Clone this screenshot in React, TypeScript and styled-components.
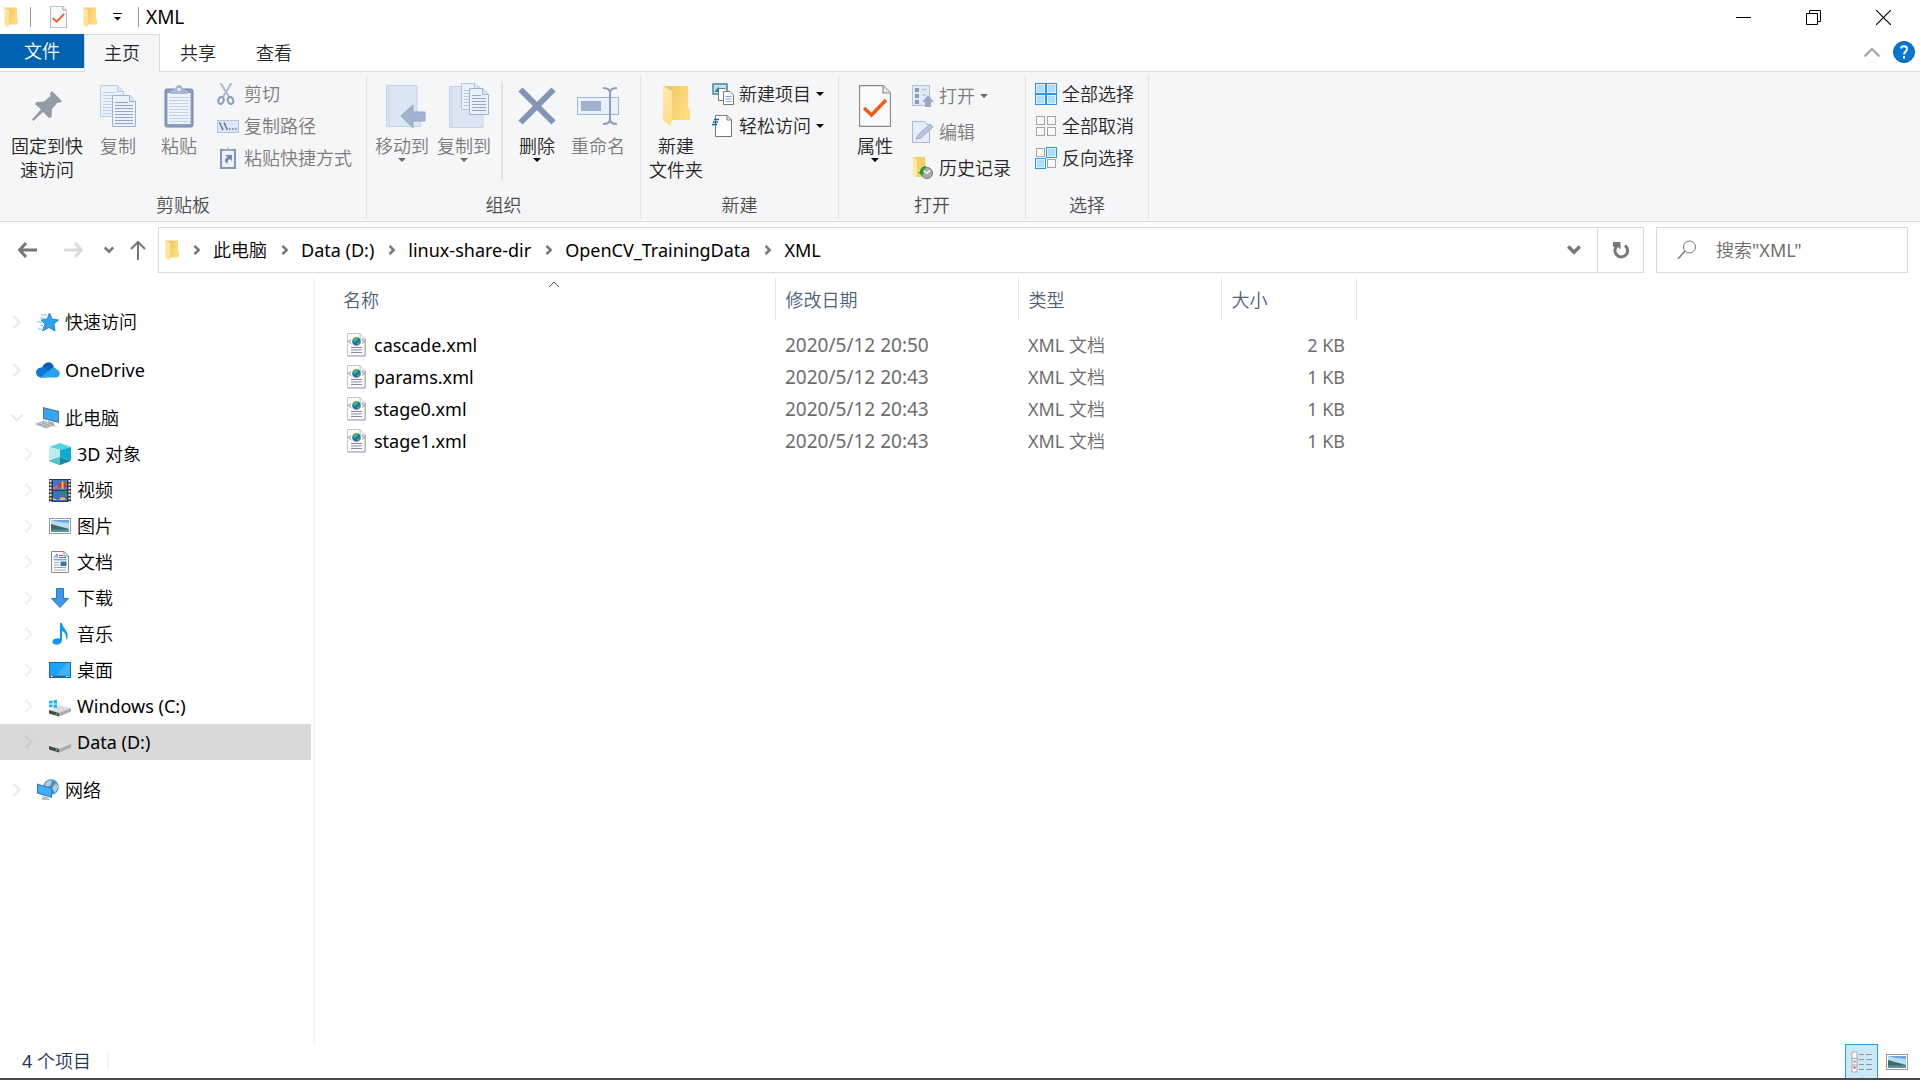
import React from "react";
import styled, { createGlobalStyle } from "styled-components";

const Global = createGlobalStyle`
  *, *::before, *::after { box-sizing: border-box; }
  body { margin: 0; background: #fff; }
  body, button, input, table {
    font-family: "Noto Sans", "Noto Sans CJK SC DemiLight", "Noto Sans CJK SC", sans-serif;
    font-size: 18px;
    line-height: 24px;
    color: #000;
  }
  button { border: 0; padding: 0; background: none; }
  svg { display: block; flex: none; }
  ul, ol { margin: 0; padding: 0; list-style: none; }
`;

/* ---------- icons ---------- */

const FolderIcon = ({ w = 14, h = 21 }: { w?: number; h?: number }) => (
  <svg width={w} height={h} viewBox="0 0 28 42">
    <defs>
      <linearGradient id="fback" x1="0" y1="0" x2="1" y2="0.4">
        <stop offset="0" stopColor="#e9c25c" />
        <stop offset="1" stopColor="#ffdd80" />
      </linearGradient>
      <linearGradient id="ffront" x1="0" y1="0" x2="0" y2="1">
        <stop offset="0" stopColor="#ffe9a8" />
        <stop offset="1" stopColor="#ffdf86" />
      </linearGradient>
    </defs>
    <path d="M1 1H26V22L28 25V35H4Z" fill="url(#fback)" />
    <path d="M1 1L10 6V36L8 41L1 35Z" fill="url(#ffront)" />
  </svg>
);

const CheckDocIcon = ({ w, h }: { w: number; h: number }) => (
  <svg width={w} height={h} viewBox="0 0 32 42">
    <path d="M.5 .5H24L31.500 8V41.500H.5Z" fill="#fafafa" stroke="#8a8a8a" strokeWidth="1.300" />
    <path d="M24 .5V8H31.500" fill="#e8e8e8" stroke="#8a8a8a" strokeWidth="1.200" />
    <path d="M5 23L12.500 30L27 15" fill="none" stroke="#f4591a" strokeWidth="3.400" />
  </svg>
);

const PinIcon = () => (
  <svg width="30" height="30" viewBox="0 0 30 30">
    <path d="M20 0L30 10L27 12L25.500 11.500L20 18L19.500 26L17 27L11 21L1.500 30L0 28.500L9 18.500L3 13L4.500 11L12 10.500L18.500 5L18 2.500Z" fill="#929da3" />
  </svg>
);

const Sheet = ({ x, y, w, h, s = "#9fb1cd", l = "#93a5c3" }: { x: number; y: number; w: number; h: number; s?: string; l?: string }) => (
  <g transform={`translate(${x} ${y})`}>
    <path d={`M.5 .5H${w - 6}L${w - 0.5} 6.500V${h - 0.5}H.5Z`} fill="#e9f1fb" stroke={s} />
    <path d={`M${w - 6.5} .5V6.500H${w - 0.5}`} fill="#dbe6f4" stroke={s} />
    {Array.from({ length: Math.floor((h - 8) / 3) }, (_, i) => (
      <path key={i} d={`M3 ${7.5 + i * 3}H${i === 0 ? w - 8 : w - 3}`} stroke={l} />
    ))}
  </g>
);

const CopyIcon = () => (
  <svg width="36" height="42" viewBox="0 0 36 42">
    <Sheet x={0} y={0} w={24} h={32} s="#bccbe0" l="#c3d0e4" />
    <Sheet x={12} y={10} w={24} h={32} />
  </svg>
);

const PasteIcon = () => (
  <svg width="30" height="43" viewBox="0 0 30 43">
    <rect x="1" y="4" width="28" height="38" rx="2" fill="#8b9cbf" stroke="#7386ab" />
    <rect x="3.500" y="8" width="23" height="31" fill="#edf3fc" />
    {Array.from({ length: 9 }, (_, i) => (
      <path key={i} d={`M5 ${12.5 + i * 3}H25`} stroke="#c6d3e7" />
    ))}
    <path d="M6 9V6L11 4C12 1 13 0 15 0S18 1 19 4L24 6V9Z" fill="#a9b7cf" />
    <rect x="13.500" y="3" width="3" height="3" fill="#e9f0fa" />
  </svg>
);

const CutIcon = () => (
  <svg width="22" height="22" viewBox="0 0 22 22" fill="none">
    <path d="M3.500 0L12 14M14.500 0L6 14" stroke="#a9bad2" strokeWidth="2" />
    <ellipse cx="4" cy="17.500" rx="2.600" ry="3.500" stroke="#8b9cbb" strokeWidth="2" transform="rotate(20 4 17.500)" />
    <ellipse cx="13.500" cy="17.500" rx="2.600" ry="3.500" stroke="#8b9cbb" strokeWidth="2" transform="rotate(-20 13.500 17.500)" />
  </svg>
);

const PathIcon = () => (
  <svg width="22" height="22" viewBox="0 0 22 22">
    <rect x=".5" y="5.500" width="21" height="12" fill="#dbe7f6" stroke="#b3c2d9" />
    <path d="M2.500 7.500L6 15M7 7.500L10.500 15" stroke="#62718f" strokeWidth="1.500" />
    <path d="M12 14h1.500M15 14h1.500M18 14h1.500" stroke="#62718f" strokeWidth="1.500" />
  </svg>
);

const ShortcutIcon = () => (
  <svg width="22" height="22" viewBox="0 0 22 22">
    <rect x="4" y="3" width="14" height="18" fill="#edf3fb" stroke="#8495b8" strokeWidth="2" />
    <path d="M6 4L9 2H10L11 0L12 2H13L16 4Z" fill="#9dacc8" />
    <path d="M8 8H15V14L13 12C10.500 13 10 15 11 17C7 15 7 12 10.500 10Z" fill="#7388ae" />
  </svg>
);

const MoveIcon = () => (
  <svg width="48" height="43" viewBox="-8 0 48 43">
    <path d="M.5 .5H31V28H34.500V41.500H.5Z" fill="#dae6f4" stroke="#c4d3e8" />
    <path d="M3 1V41" stroke="#c9d7ea" />
    <path d="M15 31L27 20V27H39V36H27V43Z" fill="#a3b3cf" stroke="#93a5c3" />
  </svg>
);

const CopyToIcon = () => (
  <svg width="50" height="46" viewBox="-10 0 50 46">
    <path d="M.5 3.500H31V32H34V44.500H.5Z" fill="#dae6f4" stroke="#c4d3e8" />
    <path d="M3 4V44" stroke="#c9d7ea" />
    <Sheet x={12} y={0} w={20} h={27} s="#b4c4dc" l="#b9c8de" />
    <Sheet x={20} y={5} w={20} h={27} />
  </svg>
);

const DeleteIcon = () => (
  <svg width="38" height="38" viewBox="0 0 38 38">
    <path d="M2.500 2.500L35.500 35.500M35.500 2.500L2.500 35.500" stroke="#8295b5" strokeWidth="6" />
  </svg>
);

const RenameIcon = () => (
  <svg width="42" height="40" viewBox="0 0 42 40" fill="none">
    <rect x=".5" y="11.500" width="41" height="17" fill="#e8f1fc" stroke="#a5b6d2" />
    <rect x="4" y="15" width="20" height="10" fill="#a0b1cd" />
    <path d="M26 2C31 2 33 4 33 7C33 4 35 2 40 2M26 38C31 38 33 36 33 33C33 36 35 38 40 38M33 5V35" stroke="#8c9dbd" strokeWidth="2" />
  </svg>
);

const NewItemIcon = () => (
  <svg width="22" height="22" viewBox="0 0 22 22">
    <rect x="1" y="1" width="14" height="10" fill="#c3e4f3" stroke="#3f87a8" strokeWidth="1.500" />
    <path d="M3 8L6 4L10 9H3Z" fill="#3b8168" />
    <path d="M6.500 5.500H13L16 8.500V17.500H6.500Z" fill="#fff" stroke="#777" />
    <path d="M11.500 8.500H18L21.500 12V21.500H11.500Z" fill="#fff" stroke="#777" />
    <path d="M13.500 13.500h6M13.500 16h6M13.500 18.500h6" stroke="#7da5e0" />
  </svg>
);

const EasyAccessIcon = () => (
  <svg width="22" height="22" viewBox="0 0 22 22">
    <path d="M3.500 .5H15L19.500 5V21.500H3.500Z" fill="#fdfdfd" stroke="#777" />
    <path d="M15 .5V5H19.500" fill="none" stroke="#777" />
    <path d="M2 4.500H7M1 7H6M0 9.500H5" stroke="#1565b0" strokeWidth="1.500" />
  </svg>
);

const OpenIcon = () => (
  <svg width="22" height="22" viewBox="0 0 22 22">
    <rect x=".5" y=".5" width="17" height="20" fill="#e1ebf8" stroke="#b3c2da" />
    <path d="M3 3h4v4H3zM3 9h4v4H3zM3 15h4v4H3z" fill="#8798b9" />
    <path d="M10 4.500H15M10 10H14" stroke="#b7c6dc" strokeWidth="1.500" />
    <path d="M16 10L22 17H19V22H13V17H10Z" fill="#98a9c8" />
  </svg>
);

const EditIcon = () => (
  <svg width="22" height="22" viewBox="0 0 22 22">
    <path d="M.5 .5H12L17.500 5V21.500H.5Z" fill="#e5eefa" stroke="#a8b9d4" />
    <path d="M4 18L6 14L18 3L21 6L9 17Z" fill="#b7c6de" stroke="#8fa3c3" strokeWidth=".8" />
  </svg>
);

const HistoryIcon = () => (
  <svg width="22" height="22" viewBox="0 0 22 22">
    <path d="M1 0H13L14 11V20H3Z" fill="#f6cf66" />
    <path d="M1 0L5 3V19L4 21L1 18Z" fill="#ffe9a8" />
    <circle cx="15" cy="16" r="5.500" fill="#a9adae" stroke="#73787a" />
    <path d="M12 14L15 16L18 13.500" fill="none" stroke="#fff" strokeWidth="1.500" />
    <path d="M14 9C10 9 8 12 8 15H6L10 19L12 15H10.500C11 13 12 12 14 11Z" fill="#2ca02c" />
  </svg>
);

const SelectIcon = ({ on }: { on: boolean[] }) => (
  <svg width="22" height="22" viewBox="0 0 22 22">
    {on.map((a, i) => {
      const x = (i % 2) * 11;
      const y = Math.floor(i / 2) * 11;
      return a ? (
        <g key={i}>
          <rect x={x + 0.5} y={y + 0.5} width="10" height="10" fill="#dff1fe" stroke="#3295e2" />
          <rect x={x + 2} y={y + 2} width="7" height="7" fill="#b0dcfc" />
        </g>
      ) : (
        <rect key={i} x={x + 1.5} y={y + 1.5} width="8" height="8" fill="#fafafa" stroke="#a5a5a5" />
      );
    })}
  </svg>
);

const Caret = ({ color = "#000" }: { color?: string }) => (
  <svg width="8" height="4" viewBox="0 0 8 4">
    <path d="M0 0H8L4 4Z" fill={color} />
  </svg>
);

const Chevron = ({ dir = "right", color = "#777", size = 10, stroke = 2 }: { dir?: "right" | "down" | "up"; color?: string; size?: number; stroke?: number }) => {
  const d = { right: "M3 1L8 6L3 11", down: "M1 3L6 8L11 3", up: "M1 9L6 4L11 9" }[dir];
  return (
    <svg width={size} height={size} viewBox="0 0 12 12">
      <path d={d} fill="none" stroke={color} strokeWidth={stroke} />
    </svg>
  );
};

const Arrow = ({ dir, color }: { dir: "left" | "right" | "up"; color: string }) => (
  <svg width="20" height="20" viewBox="0 0 20 20" fill="none" stroke={color} strokeWidth={dir === "up" ? 2 : 3}>
    {dir === "left" && <path d="M19 10H2M8 3L1.500 10L8 17" />}
    {dir === "right" && <path d="M1 10H18M12 3L18.500 10L12 17" />}
    {dir === "up" && <path d="M10 20V2M3 9L10 2L17 9" />}
  </svg>
);

const RefreshIcon = () => (
  <svg width="18" height="18" viewBox="0 0 18 18">
    <path d="M6 4.200A6.300 6.300 0 1 0 13 4.500" fill="none" stroke="#777" strokeWidth="3" />
    <path d="M1 1H8.500V8.500L6 6H1Z" fill="#777" />
  </svg>
);

const SearchIcon = () => (
  <svg width="20" height="20" viewBox="0 0 20 20" fill="none" stroke="#777">
    <circle cx="12.500" cy="7" r="6" />
    <path d="M8 11L1 19" strokeWidth="1.400" />
  </svg>
);

const HelpIcon = () => (
  <svg width="22" height="22" viewBox="0 0 22 22">
    <circle cx="11" cy="11" r="10.500" fill="#0078d7" stroke="#0a5ca3" />
    <path d="M8 7.500C8.500 4.500 14 4.500 14 8C14 10.500 11 10.500 11 13.500" fill="none" stroke="#fff" strokeWidth="2" />
    <rect x="10" y="15" width="2" height="2.500" fill="#fff" />
  </svg>
);

const StarIcon = () => (
  <svg width="22" height="20" viewBox="0 0 22 20">
    <path d="M12.500 1L15 7L21.500 8L17 12L18 19L12 15.500L5.500 19L8 12L4 8L10 7Z" fill="#2f9fee" stroke="#1976c2" strokeWidth=".8" />
    <path d="M4 3H10M3 6H8M0 10H5M3 13.500H6M1 17H5" stroke="#7cc3f3" />
  </svg>
);

const CloudIcon = () => (
  <svg width="24" height="16" viewBox="0 0 24 16">
    <path d="M6 6C8-1 16-2 18 5L12 10L5 8Z" fill="#0a5eb5" />
    <path d="M4.500 15.500C-1.500 14.500-1.500 6 5 5.500C8 4.500 11 6 14 9L10 15.500Z" fill="#0f78d4" />
    <path d="M4 15.500L14 8C16 5 19 5 20 7C25 8 25 15 20 15.500Z" fill="#28a2ea" />
  </svg>
);

const PcIcon = () => (
  <svg width="24" height="22" viewBox="0 0 24 22">
    <path d="M7 0L23 4V16L7 12Z" fill="#5e7488" />
    <path d="M8 1.500L22 5V14.500L8 11Z" fill="#35a5f5" />
    <path d="M12 14L18 15.500V18L22 20L13 18Z" fill="#a9b6c1" />
    <path d="M0 17L8 14L18 18L10 21Z" fill="#c5ced6" stroke="#8d99a3" strokeWidth=".7" />
    <path d="M3 17L11 19.500M6 15.800L14 18.500" stroke="#7f8b95" strokeWidth=".7" />
  </svg>
);

const CubeIcon = () => (
  <svg width="22" height="22" viewBox="0 0 22 22">
    <path d="M0 4L11 0L22 4L11 7Z" fill="#59d2e0" />
    <path d="M0 4L11 7V14L0 18Z" fill="#b9edf0" />
    <path d="M22 4L11 7V14L22 18Z" fill="#12a9cf" />
    <path d="M0 18L11 14L22 18L11 22Z" fill="#19899f" />
    <path d="M0 18L11 14V22Z" fill="#4bc4cf" />
  </svg>
);

const VideoIcon = () => (
  <svg width="22" height="23" viewBox="0 0 22 23">
    <rect width="22" height="23" fill="#3a3a3a" />
    <path d="M1.500 1V23M20.500 1V23" stroke="#e6e6e6" strokeWidth="2" strokeDasharray="2 1.500" />
    <rect x="4" y="1" width="14" height="10" fill="#3f77cc" />
    <rect x="4" y="12" width="14" height="10" fill="#3a6fc8" />
    <circle cx="13.500" cy="6" r="3.500" fill="#d8312f" />
    <path d="M12.500 2.500H14.500V10H12.500Z" fill="#f3c62c" />
    <path d="M4 8L8 6L10 9L4 11Z" fill="#cf5b8a" />
    <path d="M11 12H18L15 16H13Z" fill="#29924a" />
    <path d="M10 21C11 17 16 17 17 21Z" fill="#f0b52b" />
    <path d="M4 19L8 21H4Z" fill="#e3d04b" />
  </svg>
);

const PictureIcon = () => (
  <svg width="22" height="16" viewBox="0 0 22 16">
    <rect x=".5" y=".5" width="21" height="15" fill="#fff" stroke="#9a9a9a" />
    <rect x="2" y="2" width="18" height="12" fill="#b9dcf5" />
    <path d="M2 2H20V5L10 4Z" fill="#6da5e4" />
    <path d="M2 6L9 8L20 11V12H2Z" fill="#3c6a5b" />
    <rect x="2" y="11.500" width="18" height="2.500" fill="#5c8fac" />
  </svg>
);

const DocIcon = () => (
  <svg width="18" height="22" viewBox="0 0 18 22">
    <path d="M.5 .5H13L17.500 5V21.500H.5Z" fill="#fff" stroke="#8a8a8a" />
    <path d="M13 .5V5H17.500" fill="none" stroke="#8a8a8a" />
    <path d="M3 7L6 3V7M8 4.500H12M8 6.500H15M2.500 8.800H15.500" fill="none" stroke="#2189d3" />
    <path d="M3 11.500H8M3 14H8M3 16.500H15M3 19H15" stroke="#a5a5a5" />
    <rect x="9.500" y="10.500" width="6" height="4.500" fill="#3d77a8" />
  </svg>
);

const DownloadIcon = () => (
  <svg width="18" height="20" viewBox="0 0 18 20">
    <path d="M5.500 .5H12.500V10.500H17.500L9 19.500L.5 10.500H5.500Z" fill="#3d96e6" stroke="#2d78c0" />
  </svg>
);

const MusicIcon = () => (
  <svg width="17" height="22" viewBox="0 0 17 22">
    <path d="M8 0H10C10 5 18 8 15 17C14 17 14.500 9 10 8V18C9 22 2 23 .5 19.500C0 16 4 14.500 8 15.500Z" fill="#0c97f0" />
  </svg>
);

const DesktopIcon = () => (
  <svg width="22" height="16" viewBox="0 0 22 16">
    <rect x=".5" y=".5" width="21" height="15" fill="#1aa1fa" stroke="#0a6fba" />
    <path d="M21 1V13H8L18 1Z" fill="#40b2ff" />
    <path d="M1 14.500H21" stroke="#0b69ae" />
    <path d="M2 14.500h1.500M17 14.500h1.500M19.500 14.500h1" stroke="#fff" />
  </svg>
);

const DriveIcon = ({ win = false }: { win?: boolean }) => (
  <svg width="22" height="22" viewBox="0 -4 22 22">
    <path d="M0 11L11 6.500L22 9L10 14Z" fill="#dcdcde" />
    <path d="M0 11L10 14V17.500L0 14.500Z" fill="#43474a" />
    <path d="M10 14L22 9V12.500L10 17.500Z" fill="#a9abad" />
    <circle cx="7.500" cy="15" r="1" fill="#3fd14a" />
    {win && <path d="M0 2L3.500 1.500V4.500H0ZM4.500 1.300L8 .8V4.500H4.500ZM0 5.500H3.500V8.500L0 8ZM4.500 5.500H8V9L4.500 8.600Z" fill="#12b5ee" />}
  </svg>
);

const NetworkIcon = () => (
  <svg width="22" height="22" viewBox="0 0 22 22">
    <circle cx="14" cy="8" r="7.800" fill="#4f93bb" />
    <path d="M8 5C11 0 14 1 15 2L13 7L9 8ZM15 9L19 4L21.500 8L18 14Z" fill="#a8d0e2" />
    <path d="M0 4.500L15 9V19L0 14.500Z" fill="#3c7ba8" />
    <path d="M1 6L14 9.800V17.500L1 13.500Z" fill="#3eb0fb" />
    <path d="M5 17L11 18.500L13 21H5Z" fill="#b6bfc6" />
  </svg>
);

const XmlIcon = () => (
  <svg width="19" height="24" viewBox="0 0 19 24">
    <path d="M.5 .5H13L18.500 6V23H.5Z" fill="#fcfcfd" stroke="#c4c4c4" />
    <path d="M18 6V23H1" fill="none" stroke="#a8a8a8" />
    <path d="M13 .5V6H18.500" fill="#eee" stroke="#b9b9b9" />
    <path d="M4 6.500L1.500 8.500L4 10.500M15 6.500L17.500 8.500L15 10.500" fill="none" stroke="#8a8a8a" />
    <circle cx="9.500" cy="8.500" r="4.300" fill="#1c6fb8" />
    <path d="M8 4.500L11 5L10 8L7 9L6 7ZM10 9.500L13 9L11 12.500Z" fill="#3fbf5c" />
    <path d="M4 14.500H15M4 17H15M4 19.500H15" stroke="#8c85a3" />
  </svg>
);

const DetailsViewIcon = () => (
  <svg width="22" height="22" viewBox="0 0 22 22">
    <path d="M1 1H6V21H1ZM1 7.500H6M1 14H6" fill="#fff" stroke="#a5a5a5" />
    <rect x="2.500" y="9.500" width="2" height="2" fill="#6f9a3a" />
    <rect x="2.500" y="15.500" width="2" height="2" fill="#c5352f" />
    <path d="M8 3.500H13M15 3.500H21M8 8.500H13M15 8.500H21M8 13.500H13M15 13.500H21M8 18.500H13M15 18.500H21" stroke="#88959c" />
  </svg>
);

/* ---------- shell ---------- */

const Window = styled.div`
  display: flex;
  flex-direction: column;
  min-height: 100vh;
  background: #fff;
  border-bottom: 2px solid #484a4a;
`;

const TitleBar = styled.header`
  display: flex;
  justify-content: space-between;
  height: 34px;
`;

const QuickAccess = styled.div`
  display: flex;
  align-items: center;
  gap: 12px;
  padding-left: 4px;
`;

const QuickTools = styled.div`
  display: flex;
  align-items: center;
  gap: 16px;
  padding: 0 4px 0 7px;
`;

const Rule = styled.span`
  width: 1px;
  height: 20px;
  background: #9a9a9a;
`;

const Title = styled.h1`
  margin: 0;
  font-size: 19px;
  font-weight: 400;
  line-height: 24px;
`;

const TitleGroup = styled.div`
  display: flex;
  align-items: center;
  gap: 7px;
`;

const WindowControls = styled.div`
  display: flex;
  padding-right: 2px;
`;

const WindowButton = styled.button`
  display: grid;
  place-items: center;
  width: 70px;
  height: 34px;
`;

const TabBar = styled.div`
  display: flex;
  justify-content: space-between;
  height: 38px;
  border-bottom: 1px solid #dadbdc;
`;

const Tabs = styled.div`
  display: flex;
`;

const FileTab = styled.button`
  width: 84px;
  height: 34px;
  color: #fff;
  background: #0063b1;
`;

const Tab = styled.button<{ $active?: boolean }>`
  height: 38px;
  padding: 0 19px 2px;
  color: #262626;
  border: 1px solid ${(p) => (p.$active ? "#dadbdc" : "transparent")};
  border-bottom: 0;
  background: ${(p) => (p.$active ? "#f5f6f7" : "none")};
`;

const TabTools = styled.div`
  display: flex;
  align-items: center;
  gap: 12px;
  padding: 0 5px 2px 0;
`;

const Ribbon = styled.section`
  display: flex;
  height: 150px;
  padding: 3px 0;
  background: #f5f6f7;
  border-bottom: 1px solid #dadbdc;
`;

const Group = styled.section`
  display: flex;
  flex-direction: column;
  border-right: 1px solid #e2e3e4;
`;

const GroupBody = styled.div`
  display: flex;
  height: 118px;
  padding: 3px 9px 0 4px;
`;

const GroupLabel = styled.h2`
  margin: 0;
  font-size: 18px;
  font-weight: 400;
  line-height: 24px;
  text-align: center;
  color: #4c4c4c;
`;

const BigButton = styled.button<{ $width: number }>`
  display: flex;
  flex-direction: column;
  align-items: center;
  width: ${(p) => p.$width}px;
  height: 108px;
  color: #262626;
  &:disabled { color: #7b7b7b; }
`;

const BigIcon = styled.span`
  display: grid;
  place-items: center;
  height: 56px;
`;

const Line = styled.span`
  display: block;
  white-space: nowrap;
`;

const SmallList = styled.div<{ $row?: number }>`
  display: grid;
  grid-auto-rows: ${(p) => p.$row ?? 32}px;
  align-content: start;
`;

const SmallButton = styled.button`
  display: flex;
  align-items: center;
  gap: 5px;
  padding: 0 5px;
  white-space: nowrap;
  color: #262626;
  &:disabled { color: #7b7b7b; }
`;

const GroupRule = styled.span`
  width: 2px;
  height: 100px;
  margin: 3px 6px 0;
  background: #e1e2e4;
`;

/* ---------- address bar ---------- */

const AddressRow = styled.div`
  display: flex;
  padding: 5px 12px 5px 10px;
`;

const NavButtons = styled.nav`
  display: flex;
`;

const NavButton = styled.button<{ $width: number }>`
  display: grid;
  place-items: center;
  width: ${(p) => p.$width}px;
`;

const AddressBox = styled.div`
  display: flex;
  flex: 1;
  align-items: center;
  height: 46px;
  margin-right: 12px;
  border: 1px solid #d9d9d9;
`;

const Crumbs = styled.ol`
  display: flex;
  flex: 1;
  align-items: center;
  padding-left: 6px;
`;

const Crumb = styled.li`
  display: flex;
  align-items: center;
  gap: 11px;
  padding-left: 13px;
  white-space: nowrap;
`;

const PlainLink = styled.a`
  color: inherit;
  text-decoration: none;
`;

const BoxButton = styled.button<{ $divided?: boolean }>`
  display: grid;
  place-items: center;
  width: 46px;
  height: 44px;
  border-left: ${(p) => (p.$divided ? "1px solid #d9d9d9" : "0")};
`;

const SearchBox = styled.label`
  display: flex;
  align-items: center;
  gap: 19px;
  width: 252px;
  height: 46px;
  padding: 0 20px;
  border: 1px solid #d9d9d9;
`;

const SearchInput = styled.input`
  flex: 1;
  min-width: 0;
  padding: 0;
  border: 0;
  outline: 0;
  background: none;
  &::placeholder { color: #6d6d6d; opacity: 1; }
`;

/* ---------- content ---------- */

const Main = styled.main`
  display: flex;
  flex: 1;
`;

const Sidebar = styled.nav`
  width: 315px;
  padding: 26px 2px 0 0;
  border-right: 2px solid #f5f5f5;
`;

const TreeItem = styled.a<{ $child?: boolean; $selected?: boolean; $gap?: boolean }>`
  display: flex;
  align-items: center;
  height: 36px;
  margin-top: ${(p) => (p.$gap ? 12 : 0)}px;
  padding-left: ${(p) => (p.$child ? 22 : 10)}px;
  color: #000;
  text-decoration: none;
  background: ${(p) => (p.$selected ? "#d9d9d9" : "none")};
`;

const TreeIcon = styled.span`
  display: grid;
  place-items: center;
  width: 24px;
  margin: 0 5px 0 12px;
`;

const Files = styled.section`
  flex: 1;
  padding-left: 18px;
`;

const FileTable = styled.table`
  width: 1023px;
  table-layout: fixed;
  border-collapse: collapse;
`;

const Col = styled.col<{ $width: number }>`
  width: ${(p) => p.$width}px;
`;

const HeadCell = styled.th`
  position: relative;
  height: 42px;
  padding: 2px 9px 0 10px;
  font-weight: 400;
  text-align: left;
  border-right: 1px solid #e5e5e5;
`;

const HeadButton = styled.button`
  color: #4c607a;
`;

const SortMark = styled.span`
  position: absolute;
  top: 0;
  left: 50%;
  transform: translateX(-50%);
`;

const FileRows = styled.tbody`
  &::before { content: ""; display: block; height: 9px; }
`;

const Cell = styled.td<{ $size?: number; $right?: boolean }>`
  height: 32px;
  padding: 0 11px 0 10px;
  font-size: ${(p) => p.$size ?? 18}px;
  color: #6d6d6d;
  text-align: ${(p) => (p.$right ? "right" : "left")};
`;

const FileName = styled.a`
  display: flex;
  align-items: center;
  gap: 8px;
  padding-left: 4px;
  color: #000;
  text-decoration: none;
`;

const StatusBar = styled.footer`
  display: flex;
  align-items: center;
  justify-content: space-between;
  height: 34px;
  padding: 0 7px 0 22px;
  color: #1e395b;
`;

const Count = styled.span`
  padding-right: 16px;
  line-height: 18px;
  border-right: 2px solid #f5f5f5;
`;

const Views = styled.div`
  display: flex;
  gap: 2px;
`;

const ViewButton = styled.button<{ $active?: boolean }>`
  display: grid;
  place-items: center;
  width: 33px;
  height: 34px;
  border: 1px solid ${(p) => (p.$active ? "#26a0da" : "transparent")};
  border-bottom: 0;
  background: ${(p) => (p.$active ? "#cbe8f6" : "none")};
`;

/* ---------- data ---------- */

const crumbs = ["此电脑", "Data (D:)", "linux-share-dir", "OpenCV_TrainingData", "XML"];

const tree = [
  { label: "快速访问", icon: <StarIcon /> },
  { label: "OneDrive", icon: <CloudIcon />, gap: true },
  { label: "此电脑", icon: <PcIcon />, gap: true, open: true },
  { label: "3D 对象", icon: <CubeIcon />, child: true },
  { label: "视频", icon: <VideoIcon />, child: true },
  { label: "图片", icon: <PictureIcon />, child: true },
  { label: "文档", icon: <DocIcon />, child: true },
  { label: "下载", icon: <DownloadIcon />, child: true },
  { label: "音乐", icon: <MusicIcon />, child: true },
  { label: "桌面", icon: <DesktopIcon />, child: true },
  { label: "Windows (C:)", icon: <DriveIcon win />, child: true },
  { label: "Data (D:)", icon: <DriveIcon />, child: true, selected: true },
  { label: "网络", icon: <NetworkIcon />, gap: true },
];

const files = [
  { name: "cascade.xml", date: "2020/5/12 20:50", size: "2 KB" },
  { name: "params.xml", date: "2020/5/12 20:43", size: "1 KB" },
  { name: "stage0.xml", date: "2020/5/12 20:43", size: "1 KB" },
  { name: "stage1.xml", date: "2020/5/12 20:43", size: "1 KB" },
];

const Big = ({ icon, lines, width, menu, disabled }: { icon: React.ReactNode; lines: string[]; width: number; menu?: boolean; disabled?: boolean }) => (
  <BigButton $width={width} disabled={disabled}>
    <BigIcon>{icon}</BigIcon>
    {lines.map((l) => (
      <Line key={l}>{l}</Line>
    ))}
    {menu && <Caret color={disabled ? "#6d6d6d" : "#000"} />}
  </BigButton>
);

const Small = ({ icon, label, menu, disabled }: { icon: React.ReactNode; label: string; menu?: boolean; disabled?: boolean }) => (
  <SmallButton disabled={disabled}>
    {icon}
    {label}
    {menu && <Caret color={disabled ? "#6d6d6d" : "#000"} />}
  </SmallButton>
);

export default function App() {
  return (
    <Window lang="zh-CN">
      <Global />
      <TitleBar>
        <QuickAccess>
          <FolderIcon />
          <Rule />
          <QuickTools>
            <button aria-label="属性"><CheckDocIcon w={17} h={22} /></button>
            <button aria-label="新建文件夹"><FolderIcon /></button>
            <button aria-label="自定义快速访问工具栏">
              <svg width="9" height="8" viewBox="0 0 9 8">
                <path d="M0 .5H9" stroke="#000" />
                <path d="M1 4H8L4.500 7.500Z" />
              </svg>
            </button>
          </QuickTools>
          <TitleGroup>
            <Rule />
            <Title>XML</Title>
          </TitleGroup>
        </QuickAccess>
        <WindowControls>
          <WindowButton aria-label="最小化">
            <svg width="15" height="15" viewBox="0 0 15 15"><path d="M0 7.500H15" stroke="#000" /></svg>
          </WindowButton>
          <WindowButton aria-label="还原">
            <svg width="15" height="15" viewBox="0 0 15 15" fill="none" stroke="#000">
              <path d="M.5 3.500H11.500V14.500H.5ZM3.500 3.500V.5H14.500V11.500H11.500" />
            </svg>
          </WindowButton>
          <WindowButton aria-label="关闭">
            <svg width="15" height="15" viewBox="0 0 15 15"><path d="M0 0L15 15M15 0L0 15" stroke="#000" strokeWidth="1.200" /></svg>
          </WindowButton>
        </WindowControls>
      </TitleBar>

      <TabBar>
        <Tabs>
          <FileTab>文件</FileTab>
          <Tab $active>主页</Tab>
          <Tab>共享</Tab>
          <Tab>查看</Tab>
        </Tabs>
        <TabTools>
          <button aria-label="最小化功能区"><Chevron dir="up" color="#a5a5a5" size={18} stroke={1.5} /></button>
          <button aria-label="帮助"><HelpIcon /></button>
        </TabTools>
      </TabBar>

      <Ribbon>
        <Group>
          <GroupBody>
            <Big width={86} icon={<PinIcon />} lines={["固定到快", "速访问"]} />
            <Big width={56} icon={<CopyIcon />} lines={["复制"]} disabled />
            <Big width={66} icon={<PasteIcon />} lines={["粘贴"]} disabled />
            <SmallList>
              <Small icon={<CutIcon />} label="剪切" disabled />
              <Small icon={<PathIcon />} label="复制路径" disabled />
              <Small icon={<ShortcutIcon />} label="粘贴快捷方式" disabled />
            </SmallList>
          </GroupBody>
          <GroupLabel>剪贴板</GroupLabel>
        </Group>
        <Group>
          <GroupBody>
            <Big width={62} icon={<MoveIcon />} lines={["移动到"]} menu disabled />
            <Big width={62} icon={<CopyToIcon />} lines={["复制到"]} menu disabled />
            <GroupRule />
            <Big width={56} icon={<DeleteIcon />} lines={["删除"]} menu />
            <Big width={66} icon={<RenameIcon />} lines={["重命名"]} disabled />
          </GroupBody>
          <GroupLabel>组织</GroupLabel>
        </Group>
        <Group>
          <GroupBody>
            <Big width={62} icon={<FolderIcon w={28} h={42} />} lines={["新建", "文件夹"]} />
            <SmallList>
              <Small icon={<NewItemIcon />} label="新建项目" menu />
              <Small icon={<EasyAccessIcon />} label="轻松访问" menu />
            </SmallList>
          </GroupBody>
          <GroupLabel>新建</GroupLabel>
        </Group>
        <Group>
          <GroupBody>
            <Big width={64} icon={<CheckDocIcon w={32} h={42} />} lines={["属性"]} menu />
            <SmallList $row={36}>
              <Small icon={<OpenIcon />} label="打开" menu disabled />
              <Small icon={<EditIcon />} label="编辑" disabled />
              <Small icon={<HistoryIcon />} label="历史记录" />
            </SmallList>
          </GroupBody>
          <GroupLabel>打开</GroupLabel>
        </Group>
        <Group>
          <GroupBody>
            <SmallList>
              <Small icon={<SelectIcon on={[true, true, true, true]} />} label="全部选择" />
              <Small icon={<SelectIcon on={[false, false, false, false]} />} label="全部取消" />
              <Small icon={<SelectIcon on={[false, true, true, false]} />} label="反向选择" />
            </SmallList>
          </GroupBody>
          <GroupLabel>选择</GroupLabel>
        </Group>
      </Ribbon>

      <AddressRow>
        <NavButtons aria-label="导航">
          <NavButton $width={36} aria-label="后退"><Arrow dir="left" color="#777" /></NavButton>
          <NavButton $width={54} aria-label="前进"><Arrow dir="right" color="#dcdcdc" /></NavButton>
          <NavButton $width={18} aria-label="最近浏览的位置"><Chevron dir="down" stroke={3} /></NavButton>
          <NavButton $width={40} aria-label="向上"><Arrow dir="up" color="#777" /></NavButton>
        </NavButtons>
        <AddressBox>
          <Crumbs>
            <FolderIcon />
            {crumbs.map((c) => (
              <Crumb key={c}>
                <Chevron stroke={3} />
                <PlainLink href="#">{c}</PlainLink>
              </Crumb>
            ))}
          </Crumbs>
          <BoxButton aria-label="上一个位置"><Chevron dir="down" size={14} stroke={3} /></BoxButton>
          <BoxButton $divided aria-label="刷新"><RefreshIcon /></BoxButton>
        </AddressBox>
        <SearchBox>
          <SearchIcon />
          <SearchInput type="text" aria-label="搜索" placeholder={'搜索"XML"'} />
        </SearchBox>
      </AddressRow>

      <Main>
        <Sidebar aria-label="导航窗格">
          {tree.map((t) => (
            <TreeItem key={t.label} href="#" $child={t.child} $gap={t.gap} $selected={t.selected}>
              <Chevron dir={t.open ? "down" : "right"} size={14} stroke={2} color={t.selected ? "#cbcbcb" : t.child ? "#f0f0f0" : "#e9e9e9"} />
              <TreeIcon>{t.icon}</TreeIcon>
              {t.label}
            </TreeItem>
          ))}
        </Sidebar>
        <Files>
          <FileTable>
            <colgroup>
              <Col $width={442} />
              <Col $width={243} />
              <Col $width={203} />
              <Col $width={135} />
            </colgroup>
            <thead>
              <tr>
                <HeadCell>
                  <HeadButton>名称</HeadButton>
                  <SortMark><Chevron dir="up" size={12} stroke={1} color="#555" /></SortMark>
                </HeadCell>
                <HeadCell><HeadButton>修改日期</HeadButton></HeadCell>
                <HeadCell><HeadButton>类型</HeadButton></HeadCell>
                <HeadCell><HeadButton>大小</HeadButton></HeadCell>
              </tr>
            </thead>
            <FileRows>
              {files.map((f) => (
                <tr key={f.name}>
                  <Cell><FileName href="#"><XmlIcon />{f.name}</FileName></Cell>
                  <Cell $size={19}>{f.date}</Cell>
                  <Cell>XML 文档</Cell>
                  <Cell $right>{f.size}</Cell>
                </tr>
              ))}
            </FileRows>
          </FileTable>
        </Files>
      </Main>

      <StatusBar>
        <Count>4 个项目</Count>
        <Views>
          <ViewButton $active aria-label="详细信息"><DetailsViewIcon /></ViewButton>
          <ViewButton aria-label="大缩略图"><PictureIcon /></ViewButton>
        </Views>
      </StatusBar>
    </Window>
  );
}
